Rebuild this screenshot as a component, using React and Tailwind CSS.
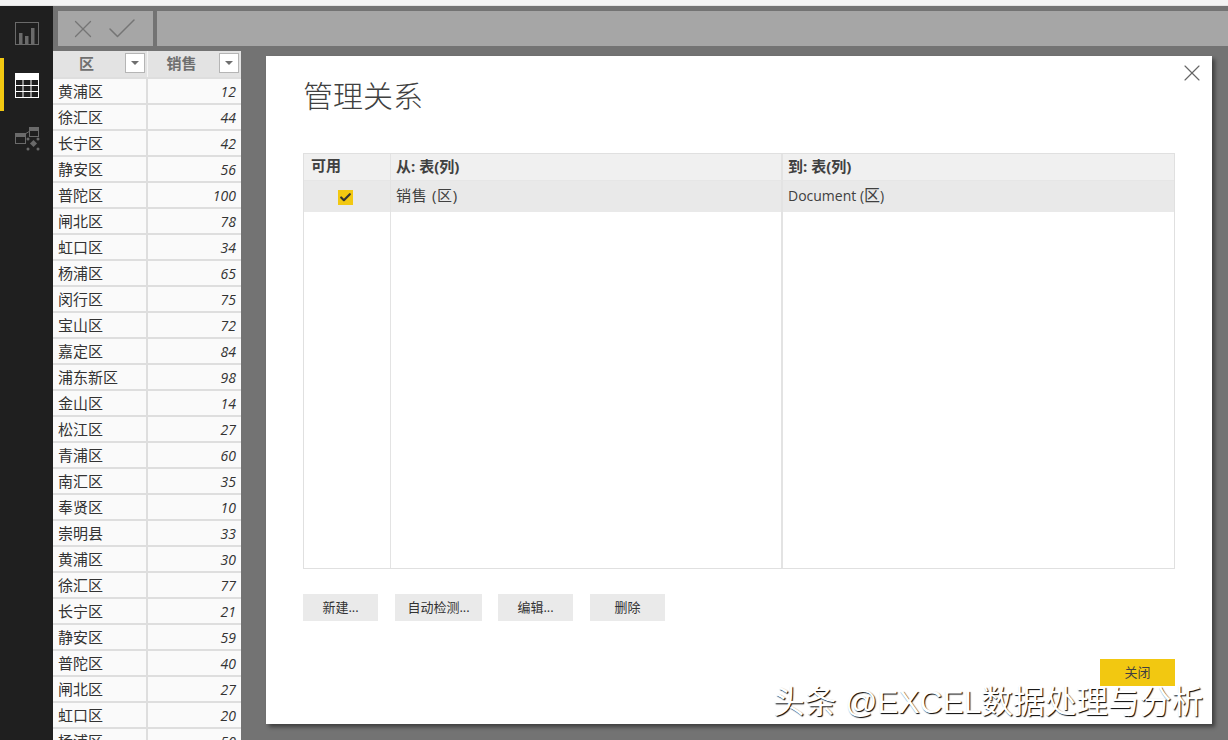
import { Check, X } from 'lucide-react';

const cjk = '"Open Sans", "Noto Sans CJK SC", sans-serif';

const rows = [
  ['黄浦区', 12], ['徐汇区', 44], ['长宁区', 42], ['静安区', 56], ['普陀区', 100],
  ['闸北区', 78], ['虹口区', 34], ['杨浦区', 65], ['闵行区', 75], ['宝山区', 72],
  ['嘉定区', 84], ['浦东新区', 98], ['金山区', 14], ['松江区', 27], ['青浦区', 60],
  ['南汇区', 35], ['奉贤区', 10], ['崇明县', 33], ['黄浦区', 30], ['徐汇区', 77],
  ['长宁区', 21], ['静安区', 59], ['普陀区', 40], ['闸北区', 27], ['虹口区', 20],
  ['杨浦区', 50],
];

function Sidebar() {
  return (
    <aside className="w-[53px] h-full shrink-0 bg-[#1f1f1f] flex flex-col relative">
      <svg className="absolute left-[15px] top-[16px]" width="24" height="24" viewBox="0 0 24 24" fill="none">
        <rect x="0.5" y="0.5" width="23" height="22" stroke="#6a6a6a" />
        <rect x="4" y="11" width="3.5" height="11" fill="#6a6a6a" />
        <rect x="10" y="14" width="3.5" height="8" fill="#6a6a6a" />
        <rect x="16" y="6" width="3.5" height="16" fill="#6a6a6a" />
      </svg>
      <div className="absolute left-0 top-[52px] w-[4px] h-[53px] bg-[#f2c811]" />
      <svg className="absolute left-[15px] top-[67px]" width="24" height="25" viewBox="0 0 24 25">
        <rect width="24" height="25" fill="#ffffff" />
        <g fill="#1f1f1f">
          <rect x="1" y="7" width="6.5" height="5" />
          <rect x="8.5" y="7" width="7" height="5" />
          <rect x="16.5" y="7" width="6.5" height="5" />
          <rect x="1" y="13" width="6.5" height="5" />
          <rect x="8.5" y="13" width="7" height="5" />
          <rect x="16.5" y="13" width="6.5" height="5" />
          <rect x="1" y="19" width="6.5" height="5" />
          <rect x="8.5" y="19" width="7" height="5" />
          <rect x="16.5" y="19" width="6.5" height="5" />
        </g>
      </svg>
      <svg className="absolute left-[15px] top-[121px]" width="25" height="24" viewBox="0 0 25 24" fill="none">
        <rect x="0.5" y="6.5" width="10" height="10" stroke="#6a6a6a" />
        <rect x="1" y="7" width="9" height="3" fill="#6a6a6a" />
        <rect x="14.5" y="0.5" width="9" height="9" stroke="#6a6a6a" />
        <rect x="15" y="1" width="8" height="3" fill="#6a6a6a" />
        <path d="M10 7 L15 4" stroke="#6a6a6a" />
        <rect x="16" y="14" width="5" height="5" fill="#6a6a6a" transform="rotate(45 18.5 16.5)" />
        <circle cx="13" cy="22" r="1.5" fill="#6a6a6a" />
        <circle cx="23" cy="22" r="1.5" fill="#6a6a6a" />
        <circle cx="13" cy="12" r="1.5" fill="#6a6a6a" />
        <circle cx="23" cy="12" r="1.5" fill="#6a6a6a" />
      </svg>
    </aside>
  );
}

function HeaderCell({ label, className }) {
  return (
    <div className={`h-[26px] bg-[#e3e3e3] relative text-[15px] leading-[24px] font-bold text-[#6f6f6f] ${className}`}>
      <span className="block w-[67px] text-center">{label}</span>
      <span className="absolute right-[2px] top-[2px] w-[20px] h-[20px] bg-white border border-[#b5b5b5] flex items-center justify-center">
        <span className="w-0 h-0 border-x-[4px] border-x-transparent border-t-[4px] border-t-[#6f6f6f]" />
      </span>
    </div>
  );
}

function DataTable() {
  return (
    <div className="w-[188px] overflow-hidden" style={{ fontFamily: cjk }}>
      <div className="grid grid-cols-[95px_93px]">
        <HeaderCell label="区" className="border-r border-[#f5f5f5]" />
        <HeaderCell label="销售" />
      </div>
      {rows.map(([name, value], i) => (
        <div key={i} className="grid grid-cols-[95px_93px] h-[26px] bg-[#fafafa] border-t-2 border-[#dedede] text-[15px] text-[#333333]">
          <div className="pl-[5px] border-r-2 border-[#dedede] leading-[24px] whitespace-nowrap">{name}</div>
          <div className="pr-[5px] text-right italic text-[14px] leading-[26px]">{value}</div>
        </div>
      ))}
    </div>
  );
}

function ActionButton({ label, width }) {
  return (
    <button className={`h-[27px] bg-[#eaeaea] text-[13px] text-[#333333] ${width}`}>{label}</button>
  );
}

function RelationsDialog() {
  return (
    <div
      className="absolute left-[266px] top-[56px] w-[946px] h-[668px] bg-white shadow-[3px_3px_4px_rgba(0,0,0,0.45)] pl-[37px] pr-[37px] flex flex-col"
      style={{ fontFamily: cjk }}
    >
      <X className="absolute right-[6px] top-[3px] text-[#666666]" size={28} strokeWidth={1} />
      <h1 className="mt-[18px] h-[44px] text-[30px] leading-[44px] font-light text-[#404040]">管理关系</h1>

      <div className="mt-[35px] h-[416px] border border-[#e0e0e0] grid grid-cols-[87px_392px_1fr] grid-rows-[27px_31px_1fr] text-[#404040]">
        <div className="bg-[#f0f0f0] border-r border-[#e3e3e3] border-b border-b-[#e6e6e6] pl-[7px] text-[15px] font-bold leading-[22px]">可用</div>
        <div className="bg-[#f0f0f0] border-r-2 border-[#e3e3e3] border-b border-b-[#e6e6e6] pl-[5px] text-[15px] font-bold leading-[24px]">从: 表(列)</div>
        <div className="bg-[#f0f0f0] border-b border-b-[#e6e6e6] pl-[5px] text-[15px] font-bold leading-[24px]">到: 表(列)</div>

        <div className="bg-[#e9e9e9] border-r border-[#e3e3e3] flex justify-center items-center pr-[4px] pt-[1px]">
          <span className="w-[15px] h-[15px] bg-[#f2c811] flex items-center justify-center">
            <Check size={13} strokeWidth={4} className="text-[#333333]" />
          </span>
        </div>
        <div className="bg-[#e9e9e9] border-r-2 border-[#e3e3e3] pl-[5px] text-[15px] tracking-[0.7px] leading-[28px]">销售 (区)</div>
        <div className="bg-[#e9e9e9] pl-[5px] text-[14px] leading-[29px]">Document (<span className="text-[16px]">区</span>)</div>

        <div className="border-r border-[#e3e3e3]" />
        <div className="border-r-2 border-[#e3e3e3]" />
        <div />
      </div>

      <div className="mt-[25px] flex gap-[17px]">
        <ActionButton label="新建..." width="w-[75px]" />
        <ActionButton label="自动检测..." width="w-[87px]" />
        <ActionButton label="编辑..." width="w-[75px] -ml-[1px]" />
        <ActionButton label="删除" width="w-[75px]" />
      </div>

      <div className="mt-[38px] flex justify-end">
        <button className="w-[75px] h-[27px] bg-[#f2c811] text-[13px] text-[#404040]">关闭</button>
      </div>
    </div>
  );
}

export default function App() {
  return (
    <div className="relative w-[1228px] h-[740px] overflow-hidden bg-[#737373] flex flex-col">
      <div className="h-[6px] shrink-0 bg-[#f3f3f3] border-b border-[#e4e4e4]" />
      <div className="flex-1 min-h-0 flex">
        <Sidebar />
        <div className="flex-1 min-w-0 flex flex-col">
          <div className="mt-[5px] h-[35px] shrink-0 flex gap-[4px] pl-[5px]">
            <div className="w-[95px] bg-[#a6a6a6] flex items-center gap-[6px] pl-[10px] text-[#757575]">
              <X size={30} strokeWidth={1} />
              <Check size={36} strokeWidth={1} />
            </div>
            <div className="flex-1 bg-[#a6a6a6]" />
          </div>
          <div className="mt-[5px]">
            <DataTable />
          </div>
        </div>
      </div>
      <RelationsDialog />
      <div
        className="absolute left-[773px] top-[681px] text-[31.7px] leading-[42px] text-white whitespace-nowrap [text-shadow:1px_1px_1px_#000000]"
        style={{ fontFamily: '"Liberation Sans", "Noto Sans CJK SC", sans-serif' }}
      >
        头条 @EXCEL数据处理与分析
      </div>
    </div>
  );
}
